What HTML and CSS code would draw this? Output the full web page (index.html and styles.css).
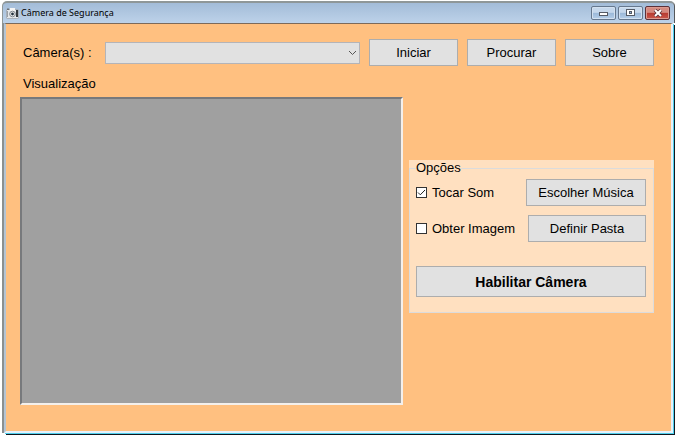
FILE: index.html
```html
<!DOCTYPE html>
<html lang="pt-BR">
<head>
    <meta charset="UTF-8">
    <meta name="viewport" content="width=device-width, initial-scale=1.0">
    <title>Câmera de Segurança</title>
    <link rel="stylesheet" href="styles.css">
</head>
<body>
    <div class="window">
        <header class="title-bar">
            <svg class="app-icon" width="13" height="11" viewBox="0 0 13 11" aria-hidden="true">
                <rect x="0.5" y="1.5" width="12" height="9" rx="1" fill="#e4e7ea" stroke="#90969c" stroke-width="0.6"/>
                <rect x="1" y="0.5" width="2" height="1.5" fill="#6c7074"/>
                <rect x="4" y="0" width="5" height="3" fill="#f4f4f4"/>
                <rect x="10" y="2" width="2" height="7" fill="#34383c"/>
                <circle cx="6.5" cy="6" r="2.8" fill="#f6f6f6" stroke="#80868c"/>
                <circle cx="6.5" cy="6" r="1.4" fill="#22303c"/>
                <rect x="1" y="3" width="1" height="6" fill="#9aa0a6"/>
            </svg>
            <h1>Câmera de Segurança</h1>
            <div class="window-buttons">
                <button type="button" aria-label="Minimizar">
                    <svg width="10" height="8" viewBox="0 0 10 8">
                        <rect x="0.5" y="3.5" width="8" height="3" fill="#fff" stroke="#555b66"/>
                    </svg>
                </button>
                <button type="button" aria-label="Maximizar">
                    <svg width="10" height="8" viewBox="0 0 10 8">
                        <rect x="0.5" y="0.5" width="8" height="6" fill="#fff" stroke="#555b66"/>
                        <rect x="3.5" y="2.5" width="2" height="2" fill="#8fb0d4" stroke="#555b66"/>
                    </svg>
                </button>
                <button type="button" class="close" aria-label="Fechar">
                    <svg width="10" height="8" viewBox="0 0 10 8">
                        <path d="M2 1l6 6M8 1l-6 6" stroke="#5c3038" stroke-width="3.6"/>
                        <path d="M2 1l6 6M8 1l-6 6" stroke="#fff" stroke-width="2"/>
                    </svg>
                </button>
            </div>
        </header>

        <main class="form">
            <div class="toolbar">
                <label for="camera">Câmera(s) :</label>
                <select id="camera"></select>
                <button type="button" class="btn">Iniciar</button>
                <button type="button" class="btn">Procurar</button>
                <button type="button" class="btn">Sobre</button>
            </div>

            <div class="content">
                <section class="view">
                    <h2>Visualização</h2>
                    <div class="preview"></div>
                </section>

                <div class="options">
                    <fieldset>
                        <legend>Opções</legend>
                        <div class="option">
                            <input type="checkbox" id="sound" checked>
                            <label for="sound">Tocar Som</label>
                            <button type="button" class="btn btn-music">Escolher Música</button>
                        </div>
                        <div class="option">
                            <input type="checkbox" id="image">
                            <label for="image">Obter Imagem</label>
                            <button type="button" class="btn btn-folder">Definir Pasta</button>
                        </div>
                        <button type="button" class="btn btn-enable">Habilitar Câmera</button>
                    </fieldset>
                </div>
            </div>
        </main>
    </div>
</body>
</html>
```

FILE: styles.css
```css
:root {
    --form-color: #ffc080;
    --group-color: #ffe0c0;
    --button-color: #e1e1e1;
    --button-border: #adadad;
}

* {
    margin: 0;
    padding: 0;
    box-sizing: border-box;
}

body {
    background-color: white;
    color: black;
    font-family: "Liberation Sans", Arial, sans-serif;
    font-size: 13px;
    line-height: 16px;
}

.window {
    display: flex;
    flex-direction: column;
    min-height: 100vh;
    padding: 1px 0 0 2px;
}

/* Title bar */
.title-bar {
    display: flex;
    align-items: center;
    gap: 2px;
    height: 22px;
    padding-left: 3px;
    padding-right: 4px;
    background: linear-gradient(#a3bcd8, #bdd2e9);
    border: 1px solid #56585a;
    border-top: 2px solid #8f9798;
    border-left-color: #8f9798;
    border-bottom: none;
    border-radius: 5px 5px 0 0;
}

.title-bar h1 {
    flex: 1;
    font-family: "Noto Sans", sans-serif;
    font-size: 9px;
    font-weight: normal;
}

.window-buttons {
    display: flex;
    gap: 2px;
}

.window-buttons button {
    display: flex;
    align-items: center;
    justify-content: center;
    width: 25px;
    height: 14px;
    background: linear-gradient(#c6d8ec 45%, #9bb8d8 50%, #b6cfe9);
    border: 1px solid #66788e;
    border-radius: 2px;
    box-shadow: inset 0 0 0 1px #d3e1f0;
}

.window-buttons .close {
    background: linear-gradient(#d58a80 45%, #b83a30 50%, #c9584c);
    border-color: #5c3038;
    box-shadow: inset 0 0 0 1px #dc9a90;
}

/* Form */
.form {
    flex: 1;
    display: flex;
    flex-direction: column;
    gap: 10px;
    margin: 0 2px 2px 2px;
    padding: 15px 17px 26px 14px;
    background-color: var(--form-color);
    border-style: solid;
    border-width: 1px 2px 2px 2px;
    border-color: #7c6a5a #e6f2fc #e6f2fc #b4c4d4;
    box-shadow: -2px 0 0 0 #8c9090, 1px 1px 0 0 #50d0ec, 2px 2px 0 0 #101820;
}

.toolbar {
    display: flex;
    align-items: center;
    gap: 9px;
    padding-left: 3px;
}

.toolbar label {
    width: 73px;
    white-space: nowrap;
}

.toolbar select {
    flex: 1;
    height: 22px;
    appearance: none;
    background: var(--button-color) url("data:image/svg+xml,%3Csvg xmlns='http://www.w3.org/2000/svg' width='9' height='6'%3E%3Cpath d='M1 1l3.5 3.5L8 1' fill='none' stroke='%23555'/%3E%3C/svg%3E") no-repeat right 2px center;
    border: 1px solid #b4b4b8;
    border-radius: 0;
}

.btn {
    height: 27px;
    background-color: var(--button-color);
    border: 1px solid var(--button-border);
    color: black;
    font: inherit;
}

.toolbar .btn {
    width: 89px;
}

.content {
    flex: 1;
    display: flex;
    gap: 6px;
}

.view {
    flex: 1;
    display: flex;
    flex-direction: column;
    gap: 5px;
}

.view h2 {
    padding-left: 3px;
    font-size: 13px;
    font-weight: normal;
}

.preview {
    flex: 1;
    background-color: #a0a0a0;
    border: 2px solid;
    border-color: #77797c #f4f0ec #f4f0ec #77797c;
}

.options {
    align-self: flex-start;
    width: 245px;
    margin-top: 84px;
    background-color: var(--group-color);
}

.options fieldset {
    display: flex;
    flex-direction: column;
    gap: 9px;
    padding: 3px 7px 15px 6px;
    border: 1px solid #dcdcdc;
}

.option {
    display: flex;
    align-items: center;
    gap: 5px;
}

.option input {
    appearance: none;
    width: 11px;
    height: 11px;
    background-color: white;
    border: 1px solid #333;
}

.option input:checked {
    background-image: url("data:image/svg+xml,%3Csvg xmlns='http://www.w3.org/2000/svg' width='9' height='9'%3E%3Cpath d='M1 4.5l2.3 2.3L8 2' fill='none' stroke='%23222'/%3E%3C/svg%3E");
}

.option label {
    flex: 1;
}

.btn-music {
    width: 120px;
}

.btn-folder {
    width: 118px;
}

.btn-enable {
    height: 31px;
    margin-top: 15px;
    font-size: 14px;
    font-weight: bold;
}
```
